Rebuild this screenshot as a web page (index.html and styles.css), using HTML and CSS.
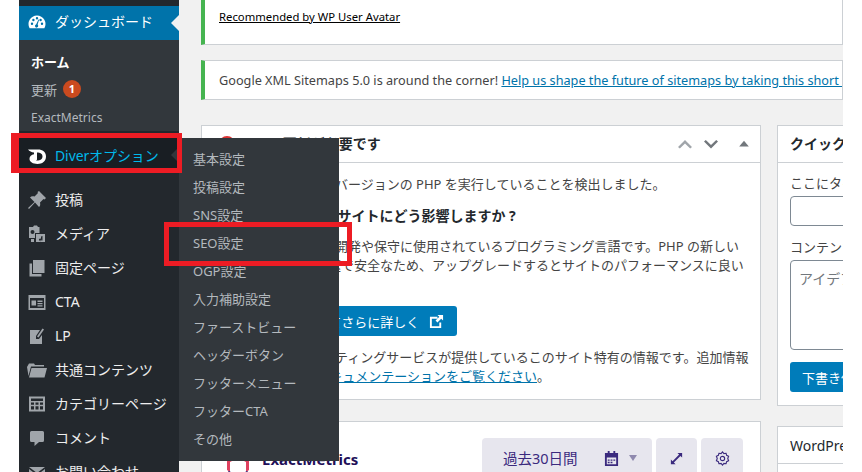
FILE: index.html
```html
<!DOCTYPE html>
<html lang="ja">
<head>
  <meta charset="UTF-8">
  <title>ダッシュボード</title>
  <link rel="stylesheet" href="styles.css">
</head>
<body>
  <div class="page">
    <!-- Admin menu -->
    <nav class="sidebar">
      <a class="menu-item menu-current">
        <svg class="menu-icon" viewBox="0 0 20 20"><path fill="#fff" d="M10 2.500a8.500 8.500 0 0 0-7.400 12.700h14.800A8.500 8.500 0 0 0 10 2.500zM5 12a1.200 1.200 0 1 1 0-2.400A1.200 1.200 0 0 1 5 12zm1.400-3.800a1.200 1.200 0 1 1 0-2.400 1.200 1.200 0 0 1 0 2.400zM10 6.500a1.200 1.200 0 1 1 0-2.400 1.200 1.200 0 0 1 0 2.400zm1.200 6.500a1.600 1.600 0 1 1-2.100-1.500L11.500 6.500l.6.2-1.500 4.900c.4.300.6.800.6 1.400zM13.600 8.200a1.200 1.200 0 1 1 0-2.400 1.200 1.200 0 0 1 0 2.400zM15 12a1.200 1.200 0 1 1 0-2.400 1.200 1.200 0 0 1 0 2.400z"/></svg>
        <span>ダッシュボード</span>
      </a>
      <div class="submenu">
        <a class="submenu-item submenu-current">ホーム</a>
        <a class="submenu-item">更新 <span class="update-count">1</span></a>
        <a class="submenu-item submenu-latin">ExactMetrics</a>
      </div>
      <a class="menu-item menu-diver">
        <svg class="menu-icon" viewBox="0 0 20 20"><path fill="#fff" fill-rule="evenodd" d="M1 4.500h10c4.500 0 8 2.300 8 7 0 4.800-3.800 7.500-8.500 7.500C6 19 2.500 17 2.500 13.800c0-2.600 2-4.300 4.500-4.600V7.500C4.500 7.300 2.500 6.300 1 4.500zM10 7.500v6.800c0 .7-.5 1.200-1.200 1.200 3.500.5 6.700-.8 6.700-4.200 0-2.600-2.400-3.800-5.500-3.800z"/></svg>
        <span>Diverオプション</span>
      </a>
      <div class="menu-list">
        <a class="menu-item">
          <svg class="menu-icon" viewBox="0 0 20 20"><path d="M12 1l7 7-1.500 1.500-1-.5-3.500 3.500c.5 2 .2 3.500-1 4.500L8 12.500 2 19l-1-1 6.500-6L3 7.500c1-1.200 2.500-1.500 4.500-1L11 3l-.5-1z"/></svg>
          <span>投稿</span>
        </a>
        <a class="menu-item">
          <svg class="menu-icon" viewBox="0 0 20 20"><path d="M2 3h4l1-1.500h3L11 3h1.500v6H8v5H2zm3.500 3a2 2 0 1 0 0 4 2 2 0 0 0 0-4zM9 10h9v8H9zm2.500 6.500h4V12l-1.500.5v2.300a1.300 1.300 0 1 0 .5 1zM4 15h3v3H4z"/></svg>
          <span>メディア</span>
        </a>
        <a class="menu-item">
          <svg class="menu-icon" viewBox="0 0 20 20"><path d="M6 2h11.500v13H6zM2.500 5.500H5V16h9.500v2.500h-12z"/></svg>
          <span>固定ページ</span>
        </a>
        <a class="menu-item">
          <svg class="menu-icon" viewBox="0 0 20 20"><path fill-rule="evenodd" d="M1.500 3h17v15h-17zM3 6v10h14V6zM4.500 8.500h4.500v5H4.500zm6 0h5V10h-5zm0 2.500h5v1.200h-5zm0 2.200h5v1.300h-5z"/></svg>
          <span>CTA</span>
        </a>
        <a class="menu-item">
          <svg class="menu-icon" viewBox="0 0 20 20"><path d="M3 4h10l-4 6v3h3l3-4v9H3zM15.500 2.500l1.500 1L11.500 11.500 10 10.500z"/></svg>
          <span>LP</span>
        </a>
        <a class="menu-item">
          <svg class="menu-icon" viewBox="0 0 20 20"><path d="M0 7l2-3.500h5l1 1.500h9v1.500H4L1.500 16zM4.500 8H20l-2.500 9.500H2z"/></svg>
          <span>共通コンテンツ</span>
        </a>
        <a class="menu-item">
          <svg class="menu-icon" viewBox="0 0 20 20"><path fill-rule="evenodd" d="M2 2.500h16v15H2zM4 4.500v2.500h12V4.500zm0 4v2.200h3V8.500zm4.500 0v2.200h3V8.500zm4.500 0v2.200h3V8.500zM4 12.200v3.300h3v-3.300zm4.500 0v3.300h3v-3.300zm4.500 0v3.300h3v-3.300z"/></svg>
          <span>カテゴリーページ</span>
        </a>
        <a class="menu-item">
          <svg class="menu-icon" viewBox="0 0 20 20"><path d="M4.500 3h11A1.500 1.500 0 0 1 17 4.500v8a1.500 1.500 0 0 1-1.500 1.500H12l-4.500 4v-4h-3A1.500 1.500 0 0 1 3 12.500v-8A1.500 1.500 0 0 1 4.500 3z"/></svg>
          <span>コメント</span>
        </a>
        <a class="menu-item">
          <svg class="menu-icon" viewBox="0 0 20 20"><path d="M2 5h16L10 11zM2 7l8 6 8-6v9H2z"/></svg>
          <span>お問い合わせ</span>
        </a>
      </div>

      <!-- Flyout for Diver -->
      <div class="flyout">
        <a>基本設定</a>
        <a>投稿設定</a>
        <a>SNS設定</a>
        <a>SEO設定</a>
        <a>OGP設定</a>
        <a>入力補助設定</a>
        <a>ファーストビュー</a>
        <a>ヘッダーボタン</a>
        <a>フッターメニュー</a>
        <a>フッターCTA</a>
        <a>その他</a>
      </div>
      <div class="red-box red-diver"></div>
      <div class="red-box red-seo"></div>
    </nav>

    <main class="content">
      <div class="notice notice-first">
        <a class="notice-link-dark">Recommended by WP User Avatar</a>
      </div>
      <div class="notice notice-second">
        Google XML Sitemaps 5.0 is around the corner! <a class="link">Help us shape the future of sitemaps by taking this short survey</a>
      </div>

      <div class="columns">
        <div class="column-main">
          <section class="postbox health-box">
            <header class="postbox-header">
              <svg class="alert-icon" viewBox="0 0 20 20"><circle cx="10" cy="10" r="8" fill="#dc3232"/></svg>
              <h2>PHP の更新が必要です</h2>
              <div class="postbox-controls">
                <svg viewBox="0 0 20 20" class="control-off"><path d="M3 13l7-7 7 7-1.800 1.600L10 9.400l-5.200 5.200z"/></svg>
                <svg viewBox="0 0 20 20"><path d="M3 7.500l1.800-1.600L10 11.100l5.200-5.200L17 7.500l-7 7z"/></svg>
                <svg viewBox="0 0 20 20"><path d="M4 13l6-7 6 7z"/></svg>
              </div>
            </header>
            <div class="health-body">
              <p class="line-first">このサイトでは古いバージョンの PHP を実行していることを検出しました。</p>
              <h3>PHP の更新はこの サイトにどう影響しますか ?</h3>
              <p>PHPはWordPressの開発や保守に使用されているプログラミング言語です。PHP の新しい<br>最新版の PHP は高速で安全なため、アップグレードするとサイトのパフォーマンスに良い</p>
              <a class="button-primary">PHP 更新についてさらに詳しく
                <svg class="external-icon" viewBox="0 0 16 16"><path fill="#fff" d="M1 3h8v2H3v8h8V9h2v6H1zM9 1h6v6l-2-2-4 4-2-2 4-4z"/></svg>
              </a>
              <p class="host-note">以下はご利用のホスティングサービスが提供しているこのサイト特有の情報です。追加情報<br>は WordPress の<a class="link">ドキュメンテーションをご覧ください</a>。</p>
            </div>
          </section>

          <section class="postbox metrics-box">
            <div class="metrics-logo">
              <svg viewBox="0 0 26 26"><path fill="#e0415f" d="M13 1l11 6v10l-3 2V9l-8-4-8 4v10l-3-2V7z"/><path fill="none" stroke="#3b2a7e" stroke-width="3" d="M3 19l10 6 10-6"/></svg>
              <span>ExactMetrics</span>
            </div>
            <div class="metrics-tools">
              <div class="tool tool-range">
                <span>過去30日間</span>
                <svg class="tool-icon" viewBox="0 0 16 16"><path fill="#3b2a7e" fill-rule="evenodd" d="M1 2h3V0h2v2h4V0h2v2h3v14H1zm2 5v7h10V7zm1 2h2v1.500H4zm3 0h2v1.500H7zm3 0h2v1.500h-2zm-6 2.500h2V13H4zm3 0h2V13H7z"/></svg>
                <svg class="tool-caret" viewBox="0 0 10 8"><path fill="#8f89ae" d="M1 1h8L5 7z"/></svg>
              </div>
              <div class="tool tool-square">
                <svg class="tool-icon" viewBox="0 0 16 16"><path fill="#3b2a7e" d="M9 2h5v5l-1.800-1.800-7 7L7 14H2V9l1.800 1.800 7-7z"/></svg>
              </div>
              <div class="tool tool-square tool-gear">
                <svg class="tool-icon" viewBox="0 0 16 16"><path fill="none" stroke="#3b2a7e" stroke-width="1.200" d="M8 1l1.500 1.700 2.300-.3.600 2.200 2.100 1-.9 2.400.9 2.400-2.100 1-.6 2.200-2.300-.3L8 15l-1.500-1.700-2.300.3-.6-2.200-2.100-1 .9-2.400-.9-2.400 2.100-1 .6-2.200 2.300.3z"/><circle cx="8" cy="8" r="2.300" fill="none" stroke="#3b2a7e" stroke-width="1.200"/></svg>
              </div>
            </div>
          </section>
        </div>

        <div class="column-side">
          <section class="postbox draft-box">
            <header class="postbox-header"><h2>クイックドラフト</h2></header>
            <div class="draft-body">
              <label>ここにタイトルを入力</label>
              <div class="form-control title-input"></div>
              <label>コンテンツ</label>
              <div class="form-control draft-text">アイデアを書き留めてみましょう。</div>
              <a class="button-primary draft-button">下書き保存</a>
            </div>
          </section>
          <section class="postbox news-box">
            <header class="postbox-header"><h2 class="news-title">WordPress イベントとニュース</h2></header>
          </section>
        </div>
      </div>
    </main>
  </div>
</body>
</html>
```

FILE: styles.css
```css
* {
  box-sizing: border-box;
}

html, body {
  margin: 0;
  height: 100%;
  overflow: hidden;
  background-color: #ffffff;
}

body {
  font-family: "Noto Sans", "Noto Sans CJK JP", sans-serif;
  font-size: 13px;
  color: #444444;
}

.page {
  display: flex;
  width: 862px;
  height: 472px;
  padding: 0 19px;
  overflow: hidden;
}

/* Sidebar */
.sidebar {
  position: relative;
  flex: 0 0 160px;
  height: 472px;
  padding-top: 6px;
  background-color: #23282d;
}

.menu-item {
  display: flex;
  align-items: center;
  height: 34px;
  padding-left: 8px;
  font-size: 14px;
  color: #eeeeee;
}

.menu-item span {
  padding-bottom: 2px;
}

.menu-icon {
  flex: 0 0 20px;
  width: 20px;
  height: 20px;
  margin-right: 8px;
  fill: #a0a5aa;
}

.menu-current {
  position: relative;
  background-color: #0073aa;
  color: #ffffff;
}

.menu-current span {
  padding-bottom: 4px;
}

.menu-current::after {
  content: "";
  position: absolute;
  right: 0;
  top: 9px;
  border: 8px solid transparent;
  border-right-color: #f1f1f1;
}

.submenu {
  height: 91px;
  padding-top: 7px;
  background-color: #32373c;
}

.submenu-item {
  display: flex;
  align-items: center;
  height: 28px;
  padding-left: 12px;
  color: #b4b9be;
  font-size: 13px;
}

.submenu-latin {
  font-size: 12px;
}

.submenu-current {
  color: #ffffff;
  font-weight: 700;
}

.update-count {
  width: 18px;
  height: 18px;
  margin-left: 6px;
  border-radius: 50%;
  background-color: #ca4a1f;
  color: #ffffff;
  font-size: 11px;
  font-weight: 700;
  line-height: 18px;
  text-align: center;
}

.menu-diver {
  position: relative;
  margin-top: 7px;
  background-color: #191e23;
  color: #00b9eb;
}

.menu-diver span {
  padding-bottom: 0;
  letter-spacing: -0.1px;
}

.menu-diver::after {
  content: "";
  position: absolute;
  right: 0;
  top: 9px;
  border: 8px solid transparent;
  border-right-color: #32373c;
}

.menu-list {
  margin-top: 11px;
}

/* Things over the menu and page */
.flyout {
  position: absolute;
  left: 160px;
  top: 138px;
  width: 160px;
  height: 323px;
  padding-top: 6px;
  background-color: #32373c;
  z-index: 2;
}

.flyout a {
  display: flex;
  align-items: center;
  height: 28px;
  padding-left: 14px;
  color: #b4b9be;
}

.red-box {
  position: absolute;
  border: 5px solid #ed1c24;
  z-index: 3;
}

.red-diver {
  left: -8px;
  top: 133px;
  width: 171px;
  height: 40px;
  border-left-width: 8px;
}

.red-seo {
  left: 145px;
  top: 222px;
  width: 188px;
  height: 44px;
}

/* Main area */
.content {
  flex: 1;
  min-width: 0;
  height: 472px;
  padding-left: 22px;
  background-color: #f1f1f1;
  overflow: hidden;
}

.notice {
  border: 1px solid #ccd0d4;
  border-left: 4px solid #46b450;
  background-color: #ffffff;
  padding-left: 14px;
  white-space: nowrap;
  overflow: hidden;
}

.notice-first {
  height: 45px;
  border-top: 0;
  padding-top: 9px;
  font-size: 11.3px;
}

.notice-second {
  height: 40px;
  margin-top: 15px;
  font-size: 12.7px;
  line-height: 38px;
}

.notice-link-dark {
  color: #000000;
  text-decoration: underline;
}

.link {
  color: #0073aa;
  text-decoration: underline;
}

.columns {
  display: flex;
  gap: 16px;
  margin-top: 25px;
}

.column-main {
  flex: 0 0 560px;
}

.column-side {
  flex: 0 0 200px;
}

.postbox {
  border: 1px solid #ccd0d4;
  background-color: #ffffff;
  overflow: hidden;
}

.postbox-header {
  display: flex;
  align-items: center;
  height: 37px;
  border-bottom: 1px solid #ccd0d4;
  padding-left: 12px;
  white-space: nowrap;
}

.postbox-header h2 {
  margin: 0 0 2px;
  font-size: 14px;
  font-weight: 700;
  color: #23282d;
}

.postbox-header .news-title {
  font-weight: 400;
  margin: 0;
}

.alert-icon {
  width: 20px;
  height: 20px;
  margin: 0 0 0 3px;
  flex: none;
}

.postbox-controls {
  display: flex;
  align-items: center;
  margin-left: auto;
  padding-right: 8px;
  fill: #72777c;
}

.postbox-controls svg {
  width: 20px;
  height: 20px;
  margin-left: 6px;
}

.postbox-controls svg:last-child {
  width: 16px;
  height: 16px;
  margin-left: 15px;
}

.control-off {
  fill: #a0a5aa;
}

.health-box {
  height: 275px;
}

.health-body {
  padding: 12px 0 0 16px;
  white-space: nowrap;
}

.health-body p {
  margin: 0;
  line-height: 19px;
}

.health-body h3 {
  margin: 12px 0 12px;
  font-size: 14px;
  line-height: 19px;
  font-weight: 700;
  color: #23282d;
}

.button-primary {
  display: inline-flex;
  align-items: center;
  height: 30px;
  padding: 0 13px 0 12px;
  border-radius: 3px;
  background-color: #007cba;
  color: #ffffff;
}

.health-body .button-primary {
  margin: 31px 0 12px;
  padding-left: 17px;
}

.external-icon {
  width: 15px;
  height: 15px;
  margin-left: 10px;
}

.metrics-box {
  position: relative;
  height: 80px;
  margin-top: 21px;
  padding: 16px 17px 0 23px;
  display: flex;
  justify-content: space-between;
}

.metrics-logo {
  display: flex;
  align-items: center;
  height: 40px;
  padding-top: 2px;
  gap: 11px;
  font-size: 15px;
  font-weight: 700;
  color: #210f59;
}

.metrics-logo svg {
  width: 26px;
  height: 26px;
  margin-top: 14px;
}

.metrics-tools {
  display: flex;
  gap: 4px;
}

.tool {
  display: flex;
  align-items: center;
  height: 40px;
  border-radius: 4px;
  background-color: #e7e6ee;
  color: #3b2a7e;
  font-size: 14.5px;
}

.tool-range {
  width: 170px;
  padding-left: 21px;
}

.tool-range span {
  margin: 0 26px 2px 0;
}

.tool-square {
  justify-content: center;
  width: 41px;
}

.tool-gear {
  width: 42px;
}

.tool-icon {
  width: 15px;
  height: 15px;
}

.tool-caret {
  width: 10px;
  height: 8px;
  margin-left: 9px;
}

.draft-box {
  height: 281px;
}

.draft-body {
  padding: 11px 0 0 12px;
  white-space: nowrap;
}

.draft-body label {
  display: block;
  line-height: 19px;
}

.form-control {
  width: 190px;
  border: 1px solid #7e8993;
  border-radius: 4px;
  background-color: #ffffff;
}

.title-input {
  height: 30px;
  margin: 3px 0 12px;
}

.draft-text {
  height: 90px;
  margin-top: 3px;
  padding: 7px 8px;
  font-size: 14px;
  color: #72777c;
}

.draft-button {
  margin-top: 12px;
  width: 120px;
}

.news-box {
  height: 60px;
  margin-top: 20px;
}
```
